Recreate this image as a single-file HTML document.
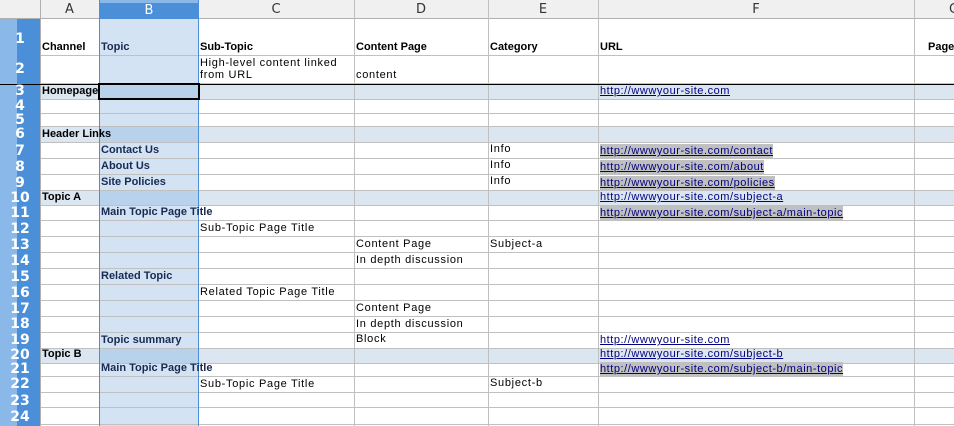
<!DOCTYPE html>
<html><head><meta charset="utf-8"><style>
body{margin:0;width:954px;height:426px;overflow:hidden;background:#fff;position:relative;font-family:"Liberation Sans","DejaVu Sans",sans-serif;}
div,span{position:absolute;box-sizing:border-box;}
.v{top:0;width:1px;height:426px;background:#c0c0c0;}
.h{left:40px;height:1px;width:914px;background:#c0c0c0;}
.t{font-size:11px;line-height:14px;white-space:nowrap;color:#000;letter-spacing:0.7px;}
.b{font-weight:bold;letter-spacing:0;}
.bb{color:#1a2a50}
.u{color:#000080;text-decoration:underline;letter-spacing:0.55px;}
.g{background:#c0c0c0;}
.rh{left:0;width:40px;color:#fff;font-weight:bold;font-size:14px;text-align:center;font-family:"DejaVu Sans",sans-serif;}
.ch{top:0;height:19px;font-size:13px;line-height:19px;text-align:center;color:#333;font-family:"DejaVu Sans",sans-serif;}
</style></head><body>
<!-- header row -->
<div style="left:0;top:0;width:954px;height:19px;background:#f0f0f0;border-bottom:1px solid #b0b0b0"></div>
<div style="left:99px;top:0;width:100px;height:19px;background:#4a8fd8;border-top:3px solid #8ab8e8"></div>
<!-- row header -->
<div style="left:0;top:19px;width:40px;height:407px;background:linear-gradient(90deg,#8ab8e8 0,#8ab8e8 17px,#4a8fd8 17px)"></div>
<!-- highlights -->
<div style="left:40px;top:84px;width:914px;height:15px;background:#dce6f1"></div>
<div style="left:40px;top:126px;width:914px;height:16px;background:#dce6f1"></div>
<div style="left:40px;top:190px;width:914px;height:15px;background:#dce6f1"></div>
<div style="left:40px;top:348px;width:914px;height:15px;background:#dce6f1"></div>
<div style="left:99px;top:19px;width:100px;height:407px;background:#d3e3f4"></div>
<div style="left:99px;top:84px;width:100px;height:15px;background:#b8d2ec"></div>
<div style="left:99px;top:126px;width:100px;height:16px;background:#b8d2ec"></div>
<div style="left:99px;top:190px;width:100px;height:15px;background:#b8d2ec"></div>
<div style="left:99px;top:348px;width:100px;height:15px;background:#b8d2ec"></div>
<!-- horizontal lines -->
<div class="h" style="top:55px"></div><div class="h" style="top:83px"></div>
<div class="h" style="top:99px"></div><div class="h" style="top:113px"></div><div class="h" style="top:126px"></div>
<div class="h" style="top:142px"></div><div class="h" style="top:158px"></div><div class="h" style="top:174px"></div>
<div class="h" style="top:190px"></div><div class="h" style="top:205px"></div><div class="h" style="top:220px"></div>
<div class="h" style="top:236px"></div><div class="h" style="top:252px"></div><div class="h" style="top:268px"></div>
<div class="h" style="top:284px"></div><div class="h" style="top:300px"></div><div class="h" style="top:316px"></div>
<div class="h" style="top:332px"></div><div class="h" style="top:348px"></div><div class="h" style="top:363px"></div>
<div class="h" style="top:376px"></div><div class="h" style="top:392px"></div><div class="h" style="top:407px"></div>
<div class="h" style="top:424px"></div>
<!-- vertical lines -->
<div class="v" style="left:40px;background:#b0b0b0"></div>
<div class="v" style="left:354px"></div><div class="v" style="left:488px"></div>
<div class="v" style="left:598px"></div><div class="v" style="left:914px"></div>
<div class="v" style="left:99px;background:#4a8fd8"></div><div class="v" style="left:198px;background:#4a8fd8"></div>
<!-- frozen line -->
<div style="left:0;top:84px;width:954px;height:1px;background:#000"></div>
<!-- selected cell -->
<div style="left:98px;top:83px;width:102px;height:17px;border:2px solid #000"></div>
<!-- column headers -->
<div class="ch" style="left:40px;width:59px">A</div>
<div class="ch" style="left:99px;width:100px;color:#fff;line-height:21px">B</div>
<div class="ch" style="left:198px;width:156px">C</div>
<div class="ch" style="left:354px;width:134px">D</div>
<div class="ch" style="left:488px;width:110px">E</div>
<div class="ch" style="left:598px;width:316px">F</div>
<div class="ch" style="left:944px;width:20px">G</div>
<!-- row numbers -->
<div class="rh" style="top:31px">1</div><div class="rh" style="top:61px">2</div>
<div class="rh" style="top:83px">3</div><div class="rh" style="top:98px">4</div>
<div class="rh" style="top:112px">5</div><div class="rh" style="top:126px">6</div>
<div class="rh" style="top:143px">7</div><div class="rh" style="top:159px">8</div>
<div class="rh" style="top:175px">9</div><div class="rh" style="top:190px">10</div>
<div class="rh" style="top:205px">11</div><div class="rh" style="top:221px">12</div>
<div class="rh" style="top:237px">13</div><div class="rh" style="top:253px">14</div>
<div class="rh" style="top:269px">15</div><div class="rh" style="top:285px">16</div>
<div class="rh" style="top:301px">17</div><div class="rh" style="top:316px">18</div>
<div class="rh" style="top:332px">19</div><div class="rh" style="top:347px">20</div>
<div class="rh" style="top:361px">21</div><div class="rh" style="top:376px">22</div>
<div class="rh" style="top:393px">23</div><div class="rh" style="top:409px">24</div>
<!-- row 1 -->
<span class="t b" style="left:42px;top:40px">Channel</span>
<span class="t b bb" style="left:101px;top:40px">Topic</span>
<span class="t b" style="left:200px;top:40px">Sub-Topic</span>
<span class="t b" style="left:356px;top:40px">Content Page</span>
<span class="t b" style="left:490px;top:40px">Category</span>
<span class="t b" style="left:600px;top:40px">URL</span>
<span class="t b" style="left:928px;top:40px">Page</span>
<!-- row 2 -->
<span class="t" style="left:200px;top:56px">High-level content linked</span>
<span class="t" style="left:200px;top:68px">from URL</span>
<span class="t" style="left:356px;top:68px">content</span>
<!-- rows -->
<span class="t b" style="left:42px;top:84px">Homepage</span>
<span class="t u" style="left:600px;top:84px">http://wwwyour-site.com</span>
<span class="t b" style="left:42px;top:127px">Header Links</span>
<span class="t b bb" style="left:101px;top:143px">Contact Us</span>
<span class="t" style="left:490px;top:142px">Info</span>
<span class="t u g" style="left:600px;top:144px">http://wwwyour-site.com/contact</span>
<span class="t b bb" style="left:101px;top:159px">About Us</span>
<span class="t" style="left:490px;top:158px">Info</span>
<span class="t u g" style="left:600px;top:160px">http://wwwyour-site.com/about</span>
<span class="t b bb" style="left:101px;top:175px">Site Policies</span>
<span class="t" style="left:490px;top:174px">Info</span>
<span class="t u g" style="left:600px;top:176px">http://wwwyour-site.com/policies</span>
<span class="t b" style="left:42px;top:190px">Topic A</span>
<span class="t u" style="left:600px;top:190px">http://wwwyour-site.com/subject-a</span>
<span class="t b bb" style="left:101px;top:205px">Main Topic Page Title</span>
<span class="t u g" style="left:600px;top:206px">http://wwwyour-site.com/subject-a/main-topic</span>
<span class="t" style="left:200px;top:221px">Sub-Topic Page Title</span>
<span class="t" style="left:356px;top:237px">Content Page</span>
<span class="t" style="left:490px;top:237px">Subject-a</span>
<span class="t" style="left:356px;top:253px">In depth discussion</span>
<span class="t b bb" style="left:101px;top:269px">Related Topic</span>
<span class="t" style="left:200px;top:285px">Related Topic Page Title</span>
<span class="t" style="left:356px;top:301px">Content Page</span>
<span class="t" style="left:356px;top:317px">In depth discussion</span>
<span class="t b bb" style="left:101px;top:333px">Topic summary</span>
<span class="t" style="left:356px;top:332px">Block</span>
<span class="t u" style="left:600px;top:333px">http://wwwyour-site.com</span>
<span class="t b" style="left:42px;top:347px">Topic B</span>
<span class="t u" style="left:600px;top:347px">http://wwwyour-site.com/subject-b</span>
<span class="t b bb" style="left:101px;top:361px">Main Topic Page Title</span>
<span class="t u g" style="left:600px;top:362px">http://wwwyour-site.com/subject-b/main-topic</span>
<span class="t" style="left:200px;top:377px">Sub-Topic Page Title</span>
<span class="t" style="left:490px;top:376px">Subject-b</span>
</body></html>
